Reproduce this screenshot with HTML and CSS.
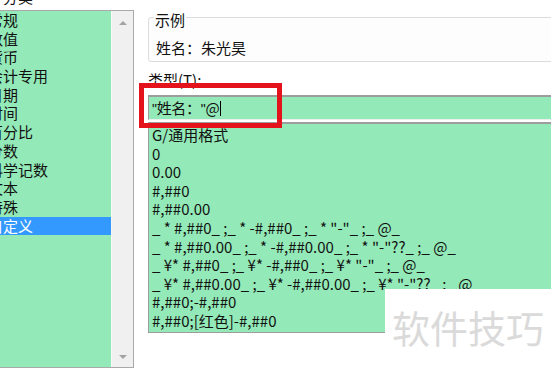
FILE: index.html
```html
<!DOCTYPE html>
<html>
<head>
<meta charset="utf-8">
<link rel="stylesheet" href="styles.css">
</head>
<body>
<div class="dlg">
  <div class="left">
    <div class="lbl cat">分类</div>
    <div class="listbox">
      <div class="items">
        <div class="item">常规</div>
        <div class="item">数值</div>
        <div class="item">货币</div>
        <div class="item">会计专用</div>
        <div class="item">日期</div>
        <div class="item">时间</div>
        <div class="item">百分比</div>
        <div class="item">分数</div>
        <div class="item">科学记数</div>
        <div class="item">文本</div>
        <div class="item">特殊</div>
        <div class="item sel">自定义</div>
      </div>
      <div class="vscroll"><span class="arr up"></span><span class="arr down"></span></div>
    </div>
  </div>
  <div class="right">
    <fieldset class="sample">
      <legend>示例</legend>
      <div class="sample-text">姓名：朱光昊</div>
    </fieldset>
    <div class="lbl type">类型(T):</div>
    <div class="input"><span class="txt"><span class="q">"</span>姓名：<span class="q">"</span>@</span><span class="caret"></span></div>
    <div class="fmtlist">
      <div class="row">G/通用格式</div>
      <div class="row">0</div>
      <div class="row">0.00</div>
      <div class="row">#,##0</div>
      <div class="row">#,##0.00</div>
      <div class="row">_ * #,##0_ ;_ * -#,##0_ ;_ * "-"_ ;_ @_</div>
      <div class="row">_ * #,##0.00_ ;_ * -#,##0.00_ ;_ * "-"??_ ;_ @_</div>
      <div class="row">_ ¥* #,##0_ ;_ ¥* -#,##0_ ;_ ¥* "-"_ ;_ @_</div>
      <div class="row">_ ¥* #,##0.00_ ;_ ¥* -#,##0.00_ ;_ ¥* "-"??_ ;_ @_</div>
      <div class="row">#,##0;-#,##0</div>
      <div class="row">#,##0;[红色]-#,##0</div>
    </div>
  </div>
</div>
<div class="redbox"></div>
<div class="watermark">软件技巧</div>
</body>
</html>
```
FILE: styles.css
```css
html, body {
  margin: 0;
  padding: 0;
}
body {
  width: 551px;
  height: 371px;
  overflow: hidden;
  position: relative;
  background: #ffffff;
  font-family: "Noto Sans CJK SC", "Noto Sans", sans-serif;
  font-size: 15px;
  color: #111;
}
.dlg {
  display: flex;
  width: 640px;
  align-items: flex-start;
}
.left {
  margin-left: -16px;
  width: 150px;
  flex: none;
}
.lbl {
  height: 18px;
  line-height: 18px;
  white-space: nowrap;
}
.cat {
  margin-top: -8px;
  line-height: 10px;
  padding-left: 19px;
}
.listbox {
  display: flex;
  height: 358px;
  box-sizing: border-box;
  border: 1px solid #a9a9a9;
}
.items {
  flex: 1;
  background: #93e9b7;
  padding-left: 3px;
}
.item {
  height: 18.7px;
  line-height: 18.7px;
  white-space: nowrap;
}
.item.sel {
  background: #3399ff;
  color: #fff;
  margin-left: -3px;
  padding-left: 3px;
}
.vscroll {
  width: 21px;
  flex: none;
  background: #f0f0f0;
  border-left: 1px solid #f7f7f7;
  display: flex;
  flex-direction: column;
  justify-content: space-between;
  align-items: center;
  padding: 10px 0 8px;
}
.arr {
  width: 0;
  height: 0;
  border-left: 4px solid transparent;
  border-right: 4px solid transparent;
}
.arr.up {
  border-bottom: 4px solid #a3a3a3;
}
.arr.down {
  border-top: 4px solid #a3a3a3;
}
.right {
  flex: 1;
  margin-left: 14px;
  padding-top: 5px;
}
.sample {
  margin: 0;
  padding: 0 6px 4px 5px;
  border: 1px solid #dcdcdc;
  border-radius: 3px;
  background: #fdfdfd;
}
.sample legend {
  padding: 6px 1px 0;
  line-height: 18px;
  height: 18px;
}
.sample-text {
  margin-top: 10px;
  line-height: 18px;
  padding-left: 2px;
}
.type {
  margin-top: 9px;
}
.input {
  margin-top: 6px;
  height: 22px;
  line-height: 22px;
  background: #93e9b7;
  border-top: 2px solid #9d9d9d;
  border-left: 1px solid #9d9d9d;
  border-bottom: 1px solid #eeeeee;
  padding-left: 3px;
  white-space: nowrap;
  display: flex;
  align-items: center;
}
.txt {
  letter-spacing: -0.3px;
}
.q {
  font-family: "Liberation Sans", sans-serif;
  font-size: 14px;
}
.caret {
  display: inline-block;
  width: 1px;
  height: 15px;
  background: #000;
  margin-left: 1px;
}
.fmtlist {
  margin-top: 2px;
  background: #93e9b7;
  border-top: 2px solid #9d9d9d;
  border-left: 1px solid #9d9d9d;
  border-bottom: 1px solid #9d9d9d;
  padding: 2px 0 1px 3px;
}
.row {
  height: 18.6px;
  line-height: 18.6px;
  white-space: nowrap;
}
.redbox {
  position: absolute;
  left: 139px;
  top: 83px;
  width: 143px;
  height: 45px;
  box-sizing: border-box;
  border: 5px solid #e3121b;
}
.watermark {
  position: absolute;
  left: 385px;
  top: 289px;
  right: 0;
  bottom: 0;
  background: #ffffff;
  color: #dadada;
  font-size: 38px;
  line-height: 38px;
  padding: 19px 0 0 7px;
  white-space: nowrap;
}
```
